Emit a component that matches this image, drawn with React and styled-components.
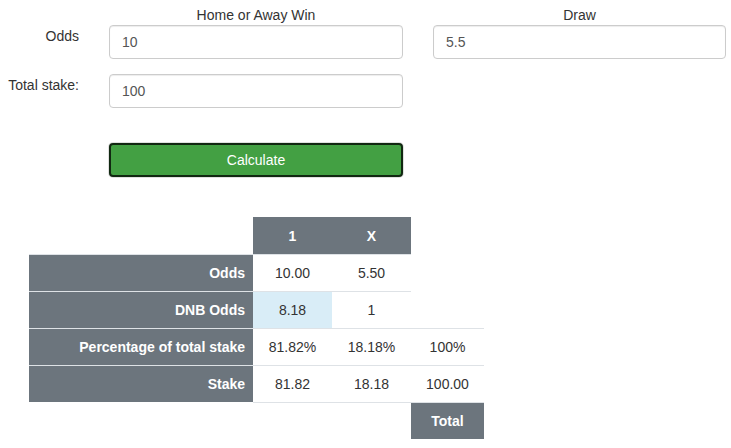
import React from 'react';
import styled, { createGlobalStyle } from 'styled-components';

const GlobalStyle = createGlobalStyle`
  body {
    margin: 0;
    background: #fff;
    font-family: "Liberation Sans", Arial, sans-serif;
    font-size: 14px;
    color: #333;
  }
`;

const Page = styled.div`
  padding-top: 6px;
`;

const FormRow = styled.div`
  display: grid;
  grid-template-columns: 79px 294px 293px;
  column-gap: 30px;
  margin-bottom: ${(p) => p.$gap || 0}px;
`;

const ColumnTitle = styled.div`
  text-align: center;
  line-height: 18px;
  height: 19px;
`;

const Label = styled.label`
  text-align: right;
  line-height: 18px;
  padding-top: 2px;
`;

const Input = styled.input`
  box-sizing: border-box;
  width: 100%;
  height: 34px;
  padding: 6px 12px;
  font-family: inherit;
  font-size: 14px;
  color: #555;
  background: #fff;
  border: 1px solid #ccc;
  border-radius: 4px;
  box-shadow: inset 0 1px 1px rgba(0, 0, 0, 0.075);
  outline: none;
`;

const Button = styled.button`
  box-sizing: border-box;
  width: 100%;
  height: 34px;
  font-family: inherit;
  font-size: 14px;
  color: #fff;
  background: #43a043;
  border: 2px solid #112811;
  border-radius: 4px;
  box-shadow: 0 0 0 1px rgba(0, 0, 0, 0.12);
  cursor: pointer;
`;

const Table = styled.table`
  margin: 40px 0 0 29px;
  border-collapse: separate;
  border-spacing: 0;
  font-size: 14px;
  color: #333;
`;

const Cell = styled.td`
  box-sizing: border-box;
  height: 37px;
  padding: 0 8px;
  text-align: center;
  vertical-align: middle;
  width: ${(p) => p.$w}px;
  border-top: ${(p) => (p.$noBorder ? 'none' : '1px solid #dee2e6')};
  background: ${(p) => (p.$info ? '#d9edf7' : 'transparent')};
`;

const HeadCell = styled(Cell).attrs({ as: 'th' })`
  background: #6c757d;
  color: #fff;
  font-weight: bold;
  text-align: ${(p) => (p.$right ? 'right' : 'center')};
`;

const rows = [
  { label: 'Odds', cells: ['10.00', '5.50'] },
  { label: 'DNB Odds', cells: ['8.18', '1'], info: 0 },
  { label: 'Percentage of total stake', cells: ['81.82%', '18.18%', '100%'] },
  { label: 'Stake', cells: ['81.82', '18.18', '100.00'] },
];

const widths = [224, 79, 79, 73];

export default function App() {
  return (
    <Page>
      <GlobalStyle />
      <FormRow>
        <div />
        <ColumnTitle>Home or Away Win</ColumnTitle>
        <ColumnTitle>Draw</ColumnTitle>
      </FormRow>
      <FormRow $gap={15}>
        <Label>Odds</Label>
        <Input defaultValue="10" />
        <Input defaultValue="5.5" />
      </FormRow>
      <FormRow $gap={35}>
        <Label>Total stake:</Label>
        <Input defaultValue="100" />
      </FormRow>
      <FormRow>
        <div />
        <Button>Calculate</Button>
      </FormRow>

      <Table>
        <thead>
          <tr>
            <Cell $w={widths[0]} $noBorder />
            <HeadCell $w={widths[1]} $noBorder>1</HeadCell>
            <HeadCell $w={widths[2]} $noBorder>X</HeadCell>
          </tr>
        </thead>
        <tbody>
          {rows.map((row) => (
            <tr key={row.label}>
              <HeadCell $right $w={widths[0]}>{row.label}</HeadCell>
              {row.cells.map((c, i) => (
                <Cell key={i} $w={widths[i + 1]} $info={row.info === i}>
                  {c}
                </Cell>
              ))}
            </tr>
          ))}
          <tr>
            <Cell $w={widths[0]} $noBorder />
            <Cell $w={widths[1]} />
            <Cell $w={widths[2]} />
            <HeadCell $w={widths[3]}>Total</HeadCell>
          </tr>
        </tbody>
      </Table>
    </Page>
  );
}
